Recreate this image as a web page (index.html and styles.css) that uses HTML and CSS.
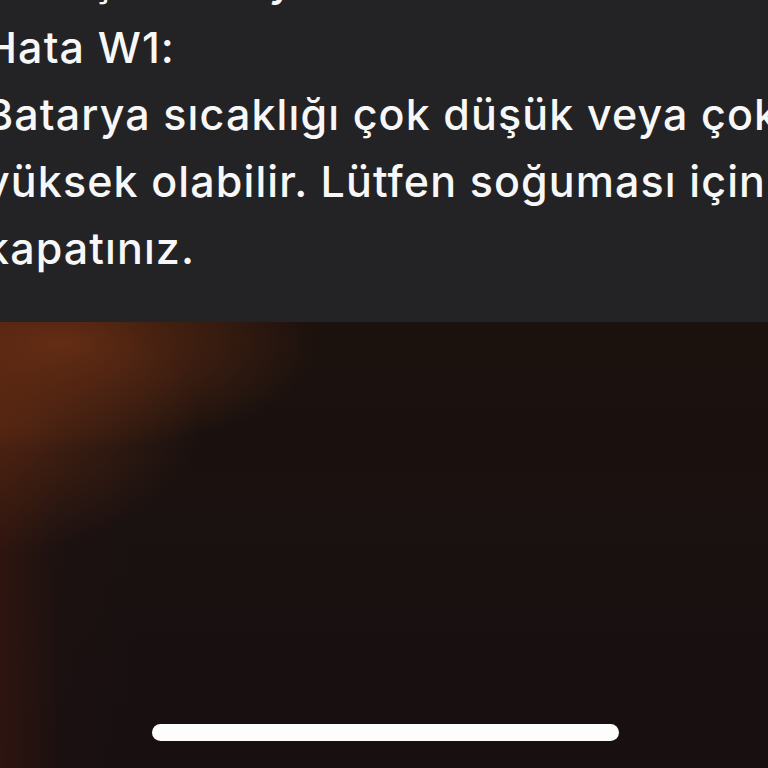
FILE: index.html
```html
<!DOCTYPE html>
<html lang="tr">
<head>
<meta charset="utf-8">
<title>Hata W1</title>
<link rel="stylesheet" href="styles.css">
</head>
<body>
<div class="screen">
  <section class="panel">
    <p class="message">Kalkış iletimi yok<br>Hata W1:<br>Batarya sıcaklığı çok düşük veya çok<br>yüksek olabilir. Lütfen soğuması için<br>kapatınız.</p>
  </section>
  <section class="backdrop">
    <div class="home-bar"></div>
  </section>
</div>
</body>
</html>
```
FILE: styles.css
```css
* { box-sizing: border-box; }
html, body {
  margin: 0;
  padding: 0;
  width: 768px;
  height: 768px;
  overflow: hidden;
  background: #170f0f;
}
.screen {
  width: 768px;
  height: 768px;
  display: flex;
  flex-direction: column;
}
.panel {
  height: 322px;
  flex: none;
  background: #232325;
  overflow: hidden;
}
.message {
  margin: -53px 0 0 -15px;
  font-family: Inter, "Noto Sans", sans-serif;
  font-size: 43px;
  font-weight: 500;
  letter-spacing: 1.1px;
  line-height: 67px;
  color: #f7f7f7;
  white-space: nowrap;
}
.backdrop {
  flex: 1;
  display: flex;
  align-items: flex-end;
  justify-content: center;
  padding-bottom: 27px;
  background:
    radial-gradient(ellipse 260px 110px at 60px 20px, rgba(110, 48, 20, 0.85), rgba(110, 48, 20, 0) 100%),
    radial-gradient(ellipse 200px 130px at 0px 100px, rgba(95, 42, 18, 0.7), rgba(95, 42, 18, 0) 100%),
    linear-gradient(90deg, rgba(60, 24, 14, 0.6) 0px, rgba(40, 20, 18, 0.2) 60px, rgba(0, 0, 0, 0) 140px),
    linear-gradient(180deg, #1b110d 0%, #1a1110 40%, #170f10 100%);
}
.home-bar {
  width: 467px;
  height: 17px;
  border-radius: 9px;
  background: #fdfdfd;
  margin-left: 3px;
}
```
